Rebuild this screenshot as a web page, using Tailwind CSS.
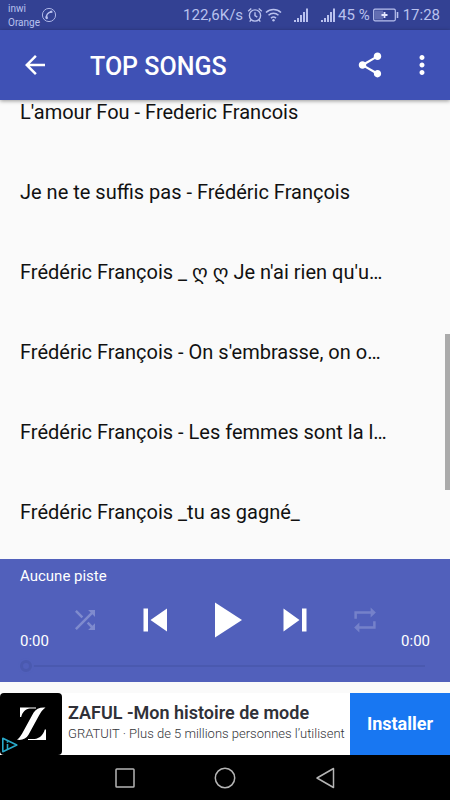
<!DOCTYPE html>
<html lang="fr">
<head>
<meta charset="utf-8">
<meta name="viewport" content="width=device-width, initial-scale=1">
<title>Top Songs</title>
<script src="https://cdn.jsdelivr.net/npm/@tailwindcss/browser@4"></script>
</head>
<body class="flex h-screen flex-col overflow-hidden bg-[#fafafa] font-['Roboto','DejaVu_Sans',sans-serif] text-[#111]">

<!-- Status bar -->
<div class="flex h-[30px] shrink-0 items-center bg-[#334193] pr-[10px] pl-2 text-[#b9c1ee]">
  <div class="pt-[2px] text-[10px] leading-[14px]"><div>inwi</div><div>Orange</div></div>
  <svg class="ml-[1px] size-4" viewBox="0 0 16 16" fill="none" stroke="currentColor" aria-hidden="true"><circle cx="8" cy="8" r="6.600" stroke-width=".9"/><path d="M5.600 11.200c-.8-2.800 1.200-5.800 4.600-6.200" stroke-width="1.400"/><path d="M8.900 5l2.500-.3M5.200 9.300l.9 2.600" stroke-width="2.200"/></svg>
  <div class="ml-auto flex items-center text-[15px] leading-[18px]">
    <span>122,6K/s</span>
    <svg class="ml-1 size-4" viewBox="0 0 16 16" fill="none" stroke="currentColor" stroke-width="1.400" aria-hidden="true"><circle cx="8" cy="8.500" r="5.600"/><path d="M8 5.300v3.400l2.300 1.500M1.200 4.200L4.300 1.500M14.800 4.200l-3.100-2.700M4.200 12.600l-1.500 2M11.800 12.600l1.500 2"/></svg>
    <svg class="ml-[2px] h-4 w-[17px]" viewBox="0 0 17 16" fill="none" stroke="currentColor" stroke-width="1.500" aria-hidden="true"><path d="M1 5.500c4.200-4 10.800-4 15 0M3.500 8.300c2.900-2.700 7.100-2.700 10 0M6 11.100c1.500-1.300 3.500-1.300 5 0"/><circle cx="8.500" cy="13.200" r="1.200" fill="currentColor" stroke="none"/></svg>
    <svg class="ml-3 h-4 w-[15px]" viewBox="0 0 15 16" fill="currentColor" aria-hidden="true"><path d="M0 13h2v2H0zM3 11h2v4H3zM6 8h2v7H6zM9 5h2v10H9zM12 1.500h2V15h-2z"/></svg>
    <svg class="ml-3 h-4 w-[15px]" viewBox="0 0 15 16" fill="currentColor" aria-hidden="true"><path d="M0 13h2v2H0zM3 11h2v4H3zM6 8h2v7H6zM9 5h2v10H9zM12 1.500h2V15h-2z"/></svg>
    <span class="ml-[2px]">45 %</span>
    <svg class="ml-[3px] h-[14px] w-[26px]" viewBox="0 0 26 14" aria-hidden="true"><rect x=".7" y="1.200" width="21.600" height="11.600" rx="1.200" fill="none" stroke="currentColor" stroke-width="1.200"/><path d="M2 2.500h8v9H2z" fill="currentColor" opacity=".35"/><path d="M11.500 4v6M8.500 7h6" stroke="#e4e7ff" stroke-width="1.800"/><path d="M24.500 4v6" stroke="currentColor" stroke-width="1.600"/></svg>
    <span class="ml-1">17:28</span>
  </div>
</div>

<!-- App bar -->
<header class="relative z-10 flex h-[70px] shrink-0 items-center bg-[#3f51b5] pr-[13px] pl-5 text-white shadow-[0_1px_4px_rgba(0,0,0,0.4)]">
  <button type="button" aria-label="Retour" class="flex size-[30px] items-center justify-center"><svg class="size-[30px]" viewBox="0 0 24 24" fill="currentColor"><path d="M20 11H7.830l5.590-5.590L12 4l-8 8 8 8 1.410-1.410L7.830 13H20v-2z"/></svg></button>
  <h1 class="ml-10 pt-[3px] text-[25px] leading-[30px] font-medium">TOP SONGS</h1>
  <button type="button" aria-label="Partager" class="ml-auto size-[30px]"><svg class="size-[30px]" viewBox="0 0 24 24" fill="currentColor"><path d="M18 16.080c-.76 0-1.440.3-1.960.77L8.910 12.700c.05-.23.09-.46.09-.7s-.04-.47-.09-.7l7.050-4.110c.54.5 1.250.81 2.040.81 1.660 0 3-1.340 3-3s-1.340-3-3-3-3 1.340-3 3c0 .24.04.47.09.7L8.040 9.810C7.500 9.310 6.790 9 6 9c-1.660 0-3 1.340-3 3s1.340 3 3 3c.79 0 1.500-.31 2.040-.81l7.120 4.160c-.05.21-.08.43-.08.650 0 1.610 1.310 2.920 2.920 2.920s2.920-1.310 2.920-2.920-1.310-2.920-2.920-2.920z"/></svg></button>
  <button type="button" aria-label="Plus d’options" class="ml-[22px] size-[30px]"><svg class="size-[30px]" viewBox="0 0 24 24" fill="currentColor"><path d="M12 8c1.100 0 2-.9 2-2s-.9-2-2-2-2 .9-2 2 .9 2 2 2zm0 2c-1.100 0-2 .9-2 2s.9 2 2 2 2-.9 2-2-.9-2-2-2zm0 6c-1.100 0-2 .9-2 2s.9 2 2 2 2-.9 2-2-.9-2-2-2z"/></svg></button>
</header>

<!-- Song list, scrolled part of the way down -->
<main class="relative min-h-0 flex-1 overflow-hidden">
  <ul class="-mt-7 pr-5 pl-5 text-[20px] leading-[80px] whitespace-nowrap">
    <li>L'amour Fou - Frederic Francois</li>
    <li>Je ne te suffis pas - Frédéric François</li>
    <li>Frédéric François _ ღ ღ Je n'ai rien qu'u…</li>
    <li>Frédéric François - On s'embrasse, on o…</li>
    <li>Frédéric François - Les femmes sont la l…</li>
    <li>Frédéric François _tu as gagné_</li>
  </ul>
  <div class="absolute top-[51%] right-0 h-[34%] w-[5px] bg-[#ababab]"></div>
</main>

<!-- Player -->
<section aria-label="Lecteur" class="shrink-0 bg-[#5160bb] px-5 pt-[7px] text-white">
  <p class="text-[15px] leading-5">Aucune piste</p>
  <div class="flex h-[68px] items-center justify-between">
    <span class="w-[30px] self-end pb-[3px] text-[15px] leading-5">0:00</span>
    <div class="grid flex-1 grid-cols-5 items-center justify-items-center">
      <button type="button" aria-label="Aléatoire" class="text-[#7f8bce]"><svg class="size-[30px]" viewBox="0 0 24 24" fill="currentColor"><path d="M10.590 9.170L5.410 4 4 5.410l5.170 5.170 1.420-1.410zM14.500 4l2.040 2.040L4 18.590 5.410 20 17.960 7.460 20 9.500V4h-5.500zm.33 9.410l-1.410 1.410 3.130 3.130L14.500 20H20v-5.500l-2.040 2.040-3.130-3.130z"/></svg></button>
      <button type="button" aria-label="Précédent"><svg class="h-6 w-6" viewBox="0 0 24 24" fill="currentColor"><path d="M.5.500H5v23H.5zM24 .5v23L7.500 12z"/></svg></button>
      <button type="button" aria-label="Lecture"><svg class="h-9 w-[34px]" viewBox="0 0 34 36" fill="currentColor"><path d="M7 .5v35L34 18z"/></svg></button>
      <button type="button" aria-label="Suivant"><svg class="h-6 w-6" viewBox="0 0 24 24" fill="currentColor"><path d="M19 .5h4.500v23H19zM.5.500v23L16.500 12z"/></svg></button>
      <button type="button" aria-label="Répéter" class="text-[#7581ca]"><svg class="size-[30px]" viewBox="0 0 24 24" fill="currentColor"><path d="M5.500 7h11v3l4.200-4-4.200-4v3h-13v6h2zM18.500 17h-11v-3l-4.200 4 4.200 4v-3h13v-6h-2z"/></svg></button>
    </div>
    <span class="w-[30px] self-end pb-[3px] text-right text-[15px] leading-5">0:00</span>
  </div>
  <div class="flex h-7 items-center pr-[5px] pb-1">
    <input type="range" aria-label="Position" min="0" max="100" value="0" class="h-3 w-full appearance-none bg-transparent [&::-webkit-slider-runnable-track]:h-[2px] [&::-webkit-slider-runnable-track]:bg-[#4a59af] [&::-webkit-slider-thumb]:-mt-[5px] [&::-webkit-slider-thumb]:size-3 [&::-webkit-slider-thumb]:appearance-none [&::-webkit-slider-thumb]:rounded-full [&::-webkit-slider-thumb]:border-[3px] [&::-webkit-slider-thumb]:border-[#4a59af] [&::-webkit-slider-thumb]:bg-[#5160bb] [&::-webkit-slider-thumb]:shadow-[0_0_0_2px_#5160bb]">
  </div>
</section>

<!-- Advertisement -->
<aside class="mt-[11px] flex h-[62px] shrink-0 bg-white">
  <div class="relative size-[62px] shrink-0 overflow-hidden rounded-[4px] bg-black">
    <svg class="size-[62px]" viewBox="0 0 62 62" aria-label="Logo Zaful"><path d="M20 14.500h16v1h-6c-4.500.6-7.500 3.200-8.800 8.500H20z" fill="#fff"/><path d="M45.500 14.500c-5.500-.5-9.500 1.200-12 5.200L23.500 38c-1.800 3.500-3.500 6.500-6.500 8.800 5.500.7 9.200-1 11.500-5L39 22.500c1.800-3.300 3.500-6 6.500-8z" fill="#fff"/><path d="M46 36.500V47H28v-1h6.500c5-.7 8.700-3.700 10.300-9.500z" fill="#fff"/></svg>
    <svg class="absolute bottom-0 left-0 h-5 w-[18px]" viewBox="0 0 18 20" fill="none" stroke="#29a9c9" stroke-width="1.600" aria-hidden="true"><path d="M2.800 3.300v13.400L16.800 10z" stroke-linejoin="round"/><path d="M7.500 9v5.500M7.500 6.200v1.500"/></svg>
  </div>
  <div class="flex min-w-0 flex-1 flex-col justify-center pl-[6px] whitespace-nowrap">
    <p class="text-[18px] leading-5 font-semibold text-[#303138]">ZAFUL -Mon histoire de mode</p>
    <p class="text-[13px] leading-[22px] font-light text-[#333438]">GRATUIT · Plus de 5 millions personnes l’utilisent</p>
  </div>
  <button type="button" class="w-[100px] shrink-0 bg-[#1877f2] text-[18px] leading-6 font-bold text-white">Installer</button>
</aside>

<!-- System navigation -->
<nav aria-label="Navigation système" class="flex h-[45px] shrink-0 items-center justify-center bg-black text-[#b5b5b5]">
  <button type="button" aria-label="Applications récentes" class="flex w-[100px] justify-center"><svg class="size-[22px]" viewBox="0 0 22 22" fill="none" stroke="currentColor" stroke-width="1.500"><rect x="2" y="2" width="18" height="18" rx=".8"/></svg></button>
  <button type="button" aria-label="Accueil" class="flex w-[100px] justify-center"><svg class="size-[22px]" viewBox="0 0 22 22" fill="none" stroke="currentColor" stroke-width="1.500"><circle cx="11" cy="11" r="9.700"/></svg></button>
  <button type="button" aria-label="Retour système" class="flex w-[100px] justify-center"><svg class="size-[22px]" viewBox="0 0 22 22" fill="none" stroke="currentColor" stroke-width="1.500" stroke-linejoin="round"><path d="M19.500 1.500v19L3 11z"/></svg></button>
</nav>
</body>
</html>
